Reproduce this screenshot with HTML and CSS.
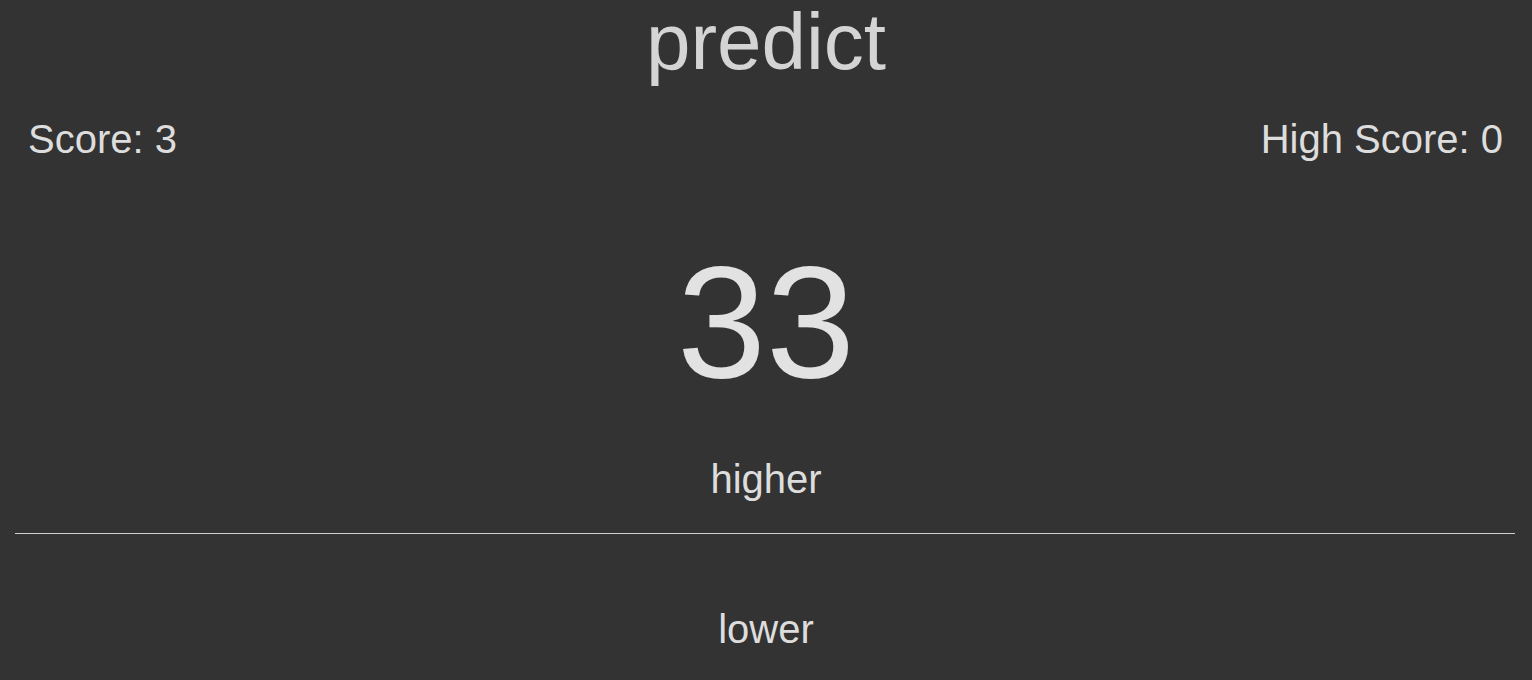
FILE: index.html
```html
<!DOCTYPE html>
<html lang="en">
<head>
<meta charset="utf-8">
<title>predict</title>
<link rel="stylesheet" href="styles.css">
</head>
<body>
<div class="app">
  <h1 class="title">predict</h1>
  <div class="scores">
    <span class="score">Score: 3</span>
    <span class="score">High Score: 0</span>
  </div>
  <div class="number">33</div>
  <button class="choice choice-higher" type="button">higher</button>
  <hr class="divider">
  <button class="choice choice-lower" type="button">lower</button>
</div>
</body>
</html>
```
FILE: styles.css
```css
html, body {
  margin: 0;
  padding: 0;
  background: #333333;
}
body {
  font-family: "Liberation Sans", Arial, sans-serif;
  color: #dddddd;
  height: 680px;
  overflow: hidden;
}
.app {
  display: flex;
  flex-direction: column;
  align-items: stretch;
}
.title {
  margin: 0;
  padding-top: 2px;
  font-size: 80px;
  font-weight: normal;
  line-height: 80px;
  text-align: center;
  color: #d4d4d4;
}
.scores {
  display: flex;
  justify-content: space-between;
  margin-top: 34px;
  padding: 0 29px 0 28px;
}
.score {
  font-size: 40px;
  line-height: 46px;
}
.number {
  margin-top: 80px;
  font-size: 160px;
  line-height: 160px;
  text-align: center;
  color: #e2e2e2;
}
.choice {
  display: block;
  background: none;
  border: none;
  padding: 0;
  margin: 0;
  font-family: inherit;
  color: #dddddd;
  font-size: 40px;
  line-height: 46px;
  text-align: center;
  width: 100%;
}
.choice-higher {
  margin-top: 54px;
}
.divider {
  margin: 31px 17px 0 15px;
  border: none;
  height: 1px;
  background: #cfcfcf;
}
.choice-lower {
  margin-top: 72px;
}
```
